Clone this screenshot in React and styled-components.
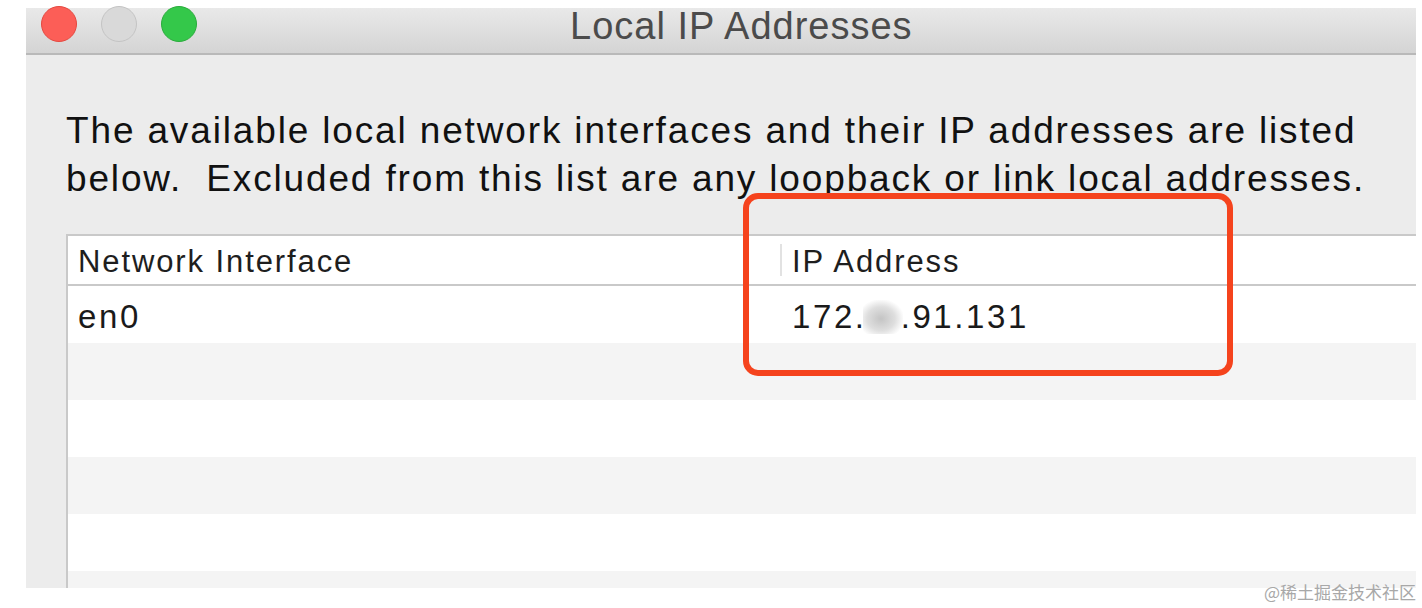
import React from 'react';
import styled, { createGlobalStyle } from 'styled-components';

const GlobalStyle = createGlobalStyle`
  html, body {
    margin: 0;
    background: #ffffff;
  }
  body {
    font-family: "Liberation Sans", Arial, sans-serif;
  }
`;

const Page = styled.div`
  width: 1422px;
  height: 608px;
  padding: 8px 0 0 26px;
  box-sizing: border-box;
  position: relative;
  overflow: hidden;
`;

const Window = styled.div`
  width: 1390px;
  height: 580px;
  background: #ececec;
  display: flex;
  flex-direction: column;
`;

const TitleBar = styled.div`
  height: 45px;
  flex: none;
  display: flex;
  align-items: flex-start;
  padding-left: 15px;
  background: linear-gradient(#e9e9e9, #d4d4d4);
  border-bottom: 2px solid #b9b9b9;
`;

const Lights = styled.div`
  display: flex;
  gap: 24px;
  margin-top: -2px;
`;

const Light = styled.span`
  width: 36px;
  height: 36px;
  border-radius: 50%;
  box-sizing: border-box;
  background: ${p => p.color};
  border: 1px solid ${p => p.edge};
`;

const Title = styled.div`
  margin-left: 373px;
  font-size: 38px;
  line-height: 36px;
  color: #4b4b4b;
  letter-spacing: 1px;
  white-space: nowrap;
`;

const Body = styled.div`
  padding: 52px 0 0 40px;
  flex: 1;
  min-height: 0;
  overflow: hidden;
`;

const Intro = styled.p`
  margin: 0;
  font-size: 37px;
  line-height: 48px;
  letter-spacing: 1.85px;
  color: #111;
  white-space: pre;
`;

const Table = styled.div`
  margin-top: 31px;
  border-top: 2px solid #c9c9c9;
  border-left: 2px solid #c9c9c9;
  background: #ffffff;
`;

const HeaderRow = styled.div`
  display: grid;
  grid-template-columns: 712px 1fr;
  height: 48px;
  align-items: center;
  border-bottom: 2px solid #c9c9c9;
  font-size: 31px;
  letter-spacing: 1.9px;
  color: #1e1e1e;
`;

const HeaderCell = styled.div`
  display: flex;
  align-items: center;
  padding: 3px 0 0 10px;
  box-sizing: border-box;
  border-left: ${p => (p.divided ? '2px solid #e2e2e2' : 'none')};
  height: ${p => (p.divided ? '32px' : 'auto')};
`;

const Row = styled.div`
  display: grid;
  grid-template-columns: 712px 1fr;
  height: 57px;
  align-items: center;
  background: ${p => (p.striped ? '#f4f4f4' : '#ffffff')};
  font-size: 33px;
  letter-spacing: 2.6px;
  color: #1a1a1a;
`;

const Cell = styled.div`
  padding: 5px 0 0 ${p => (p.second ? '12px' : '10px')};
  display: flex;
  align-items: center;
`;

const Smudge = styled.span`
  display: inline-block;
  width: 40px;
  height: 34px;
  margin: 0 -2px 0 -4px;
  background: radial-gradient(ellipse at 45% 55%, #c4c4c4 0%, #dedede 45%, rgba(255,255,255,0) 75%);
`;

const Highlight = styled.div`
  position: absolute;
  left: 743px;
  top: 193px;
  width: 490px;
  height: 183px;
  box-sizing: border-box;
  border: 6px solid #f5431d;
  border-radius: 15px;
  pointer-events: none;
`;

const Watermark = styled.div`
  position: absolute;
  right: 6px;
  bottom: 4px;
  font-size: 17px;
  color: #a8a8a8;
  font-family: "Noto Sans CJK SC", "Liberation Sans", sans-serif;
`;

const rows = [
  { name: 'en0', ip: true },
  {}, {}, {}, {}, {},
];

const App = () => (
  <>
    <GlobalStyle />
    <Page>
      <Window>
        <TitleBar>
          <Lights>
            <Light color="#fc5e57" edge="#e5483f" />
            <Light color="#d9d9d9" edge="#c4c4c4" />
            <Light color="#34c84a" edge="#2aac3c" />
          </Lights>
          <Title>Local IP Addresses</Title>
        </TitleBar>
        <Body>
          <Intro>
            {'The available local network interfaces and their IP addresses are listed\nbelow.  Excluded from this list are any loopback or link local addresses.'}
          </Intro>
          <Table>
            <HeaderRow>
              <HeaderCell>Network Interface</HeaderCell>
              <HeaderCell divided>IP Address</HeaderCell>
            </HeaderRow>
            {rows.map((r, i) => (
              <Row key={i} striped={i % 2 === 1}>
                <Cell>{r.name || ''}</Cell>
                <Cell second>
                  {r.ip ? (
                    <>
                      172.<Smudge />.91.131
                    </>
                  ) : ''}
                </Cell>
              </Row>
            ))}
          </Table>
        </Body>
      </Window>
      <Highlight />
      <Watermark>@稀土掘金技术社区</Watermark>
    </Page>
  </>
);

export default App;
